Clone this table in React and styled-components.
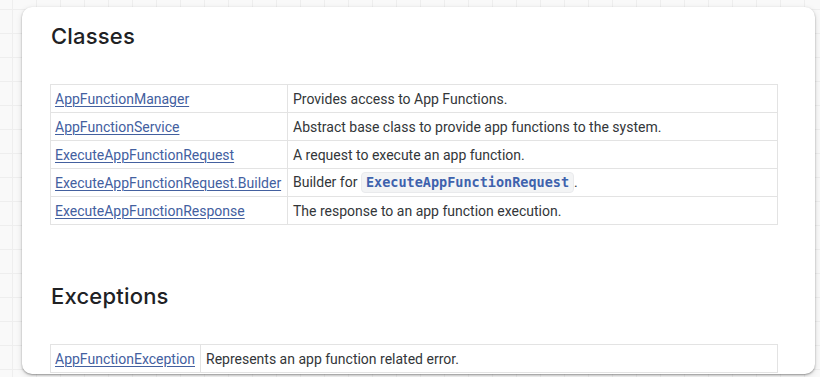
import styled, { createGlobalStyle } from "styled-components";

const classes = [
  { name: "AppFunctionManager", desc: "Provides access to App Functions." },
  {
    name: "AppFunctionService",
    desc: "Abstract base class to provide app functions to the system.",
  },
  { name: "ExecuteAppFunctionRequest", desc: "A request to execute an app function." },
  {
    name: "ExecuteAppFunctionRequest.Builder",
    desc: "Builder for",
    code: "ExecuteAppFunctionRequest",
  },
  {
    name: "ExecuteAppFunctionResponse",
    desc: "The response to an app function execution.",
  },
];

const exceptions = [
  { name: "AppFunctionException", desc: "Represents an app function related error." },
];

const ApiTable = ({ rows, nameWidth }) => (
  <Table>
    <tbody>
      {rows.map((row) => (
        <tr key={row.name}>
          <NameCell $width={nameWidth}>
            <Link href="#">{row.name}</Link>
          </NameCell>
          <DescCell>
            {row.desc}
            {row.code && (
              <>
                {" "}
                <Code>{row.code}</Code>.
              </>
            )}
          </DescCell>
        </tr>
      ))}
    </tbody>
  </Table>
);

const App = () => {
  return (
    <>
      <GlobalStyle />
      <Page>
        <Card>
          <Heading>Classes</Heading>
          <ApiTable rows={classes} nameWidth={237} />
          <Heading $gap={57}>Exceptions</Heading>
          <ApiTable rows={exceptions} nameWidth={150} />
        </Card>
      </Page>
    </>
  );
};

export default App;

const GlobalStyle = createGlobalStyle`
  html, body {
    margin: 0;
    padding: 0;
  }
  body {
    font-family: Roboto, "Liberation Sans", sans-serif;
    background: #f8f8f8;
  }
`;

const Page = styled.div`
  width: 820px;
  height: 377px;
  overflow: hidden;
  padding: 7px 5px 0 22px;
  box-sizing: border-box;
  background-color: #f9f9f9;
  background-image: linear-gradient(to right, #eeeeee 1px, transparent 1px),
    linear-gradient(to bottom, #eeeeee 1px, transparent 1px);
  background-size: 24px 24px;
  background-position: 12px 9px;
`;

const Card = styled.div`
  height: 367px;
  box-sizing: border-box;
  padding: 15px 37px 0 28px;
  background: #fff;
  border-radius: 10px;
  overflow: hidden;
  box-shadow: 0 1px 2px rgba(0, 0, 0, 0.35), 0 2px 6px rgba(0, 0, 0, 0.12);
`;

const Heading = styled.h2`
  margin: ${(p) => p.$gap || 0}px 0 34px 1px;
  font-family: Inter, "Open Sans", sans-serif;
  font-size: 22px;
  line-height: 28px;
  font-weight: 500;
  color: #202124;
  letter-spacing: 0.2px;
`;

const Table = styled.table`
  width: 100%;
  border-collapse: collapse;
  font-size: 14px;
  color: #333639;
`;

const NameCell = styled.td`
  width: ${(p) => p.$width}px;
  height: 27px;
  padding: 0 3px 0 4px;
  box-sizing: border-box;
  border: 1px solid #e3e3e3;
  white-space: nowrap;
`;

const DescCell = styled.td`
  height: 27px;
  padding: 0 5px;
  border: 1px solid #e3e3e3;
  white-space: nowrap;
`;

const Link = styled.a`
  color: #43609f;
  text-decoration: underline;
  text-underline-offset: 2px;
  text-decoration-thickness: 1px;
`;

const Code = styled.code`
  display: inline-block;
  padding: 0 4px;
  border-radius: 4px;
  background: #f3f4f5;
  border: 1px solid #e9eaec;
  font-family: "DejaVu Sans Mono", "Liberation Mono", monospace;
  font-size: 13.5px;
  font-weight: 700;
  color: #3e62ad;
  line-height: 19px;
`;
